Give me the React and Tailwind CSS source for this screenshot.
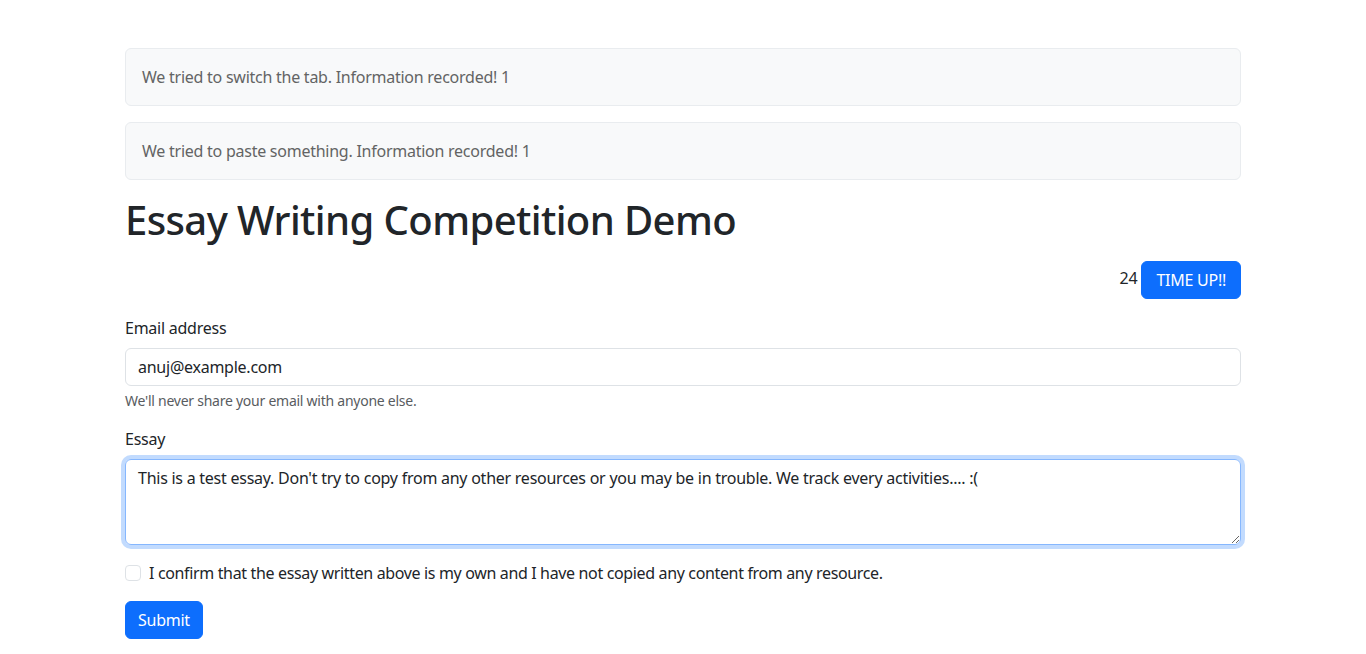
import { useState } from "react";

export default function App() {
  const [essay, setEssay] = useState(
    "This is a test essay. Don't try to copy from any other resources or you may be in trouble. We track every activities.... :("
  );

  return (
    <div
      className="min-h-screen bg-white text-[#212529] text-[16px] leading-[24px] tracking-[-0.25px]"
      style={{ fontFamily: '"Noto Sans", "Open Sans", sans-serif' }}
    >
      <div className="max-w-[1140px] mx-auto px-3 pt-12">
        {/* Alerts */}
        <div className="p-4 mb-4 border border-[#e9ecef] bg-[#f8f9fa] text-[#636464] rounded-[6px]">
          We tried to switch the tab. Information recorded! 1
        </div>
        <div className="p-4 mb-4 border border-[#e9ecef] bg-[#f8f9fa] text-[#636464] rounded-[6px]">
          We tried to paste something. Information recorded! 1
        </div>

        <h1 className="text-[40px] leading-[48px] font-medium tracking-[-0.6px] mb-2">
          Essay Writing Competition Demo
        </h1>

        {/* Timer */}
        <div className="flex justify-end items-center gap-1 mt-[17px] mb-[17px]">
          <span className="mb-[4px]">24</span>
          <button className="px-[14px] py-1.5 border border-[#0d6efd] bg-[#0d6efd] text-white rounded-[6px]">
            TIME UP!!
          </button>
        </div>

        <form onSubmit={(e) => e.preventDefault()}>
          <div className="mb-4">
            <label htmlFor="email" className="block mb-2">
              Email address
            </label>
            <input
              id="email"
              type="email"
              defaultValue="anuj@example.com"
              className="block w-full px-3 py-1.5 border border-[#dee2e6] rounded-[6px] text-[#212529] outline-none"
            />
            <div className="mt-1 text-[14px] leading-[21px] text-[#595c5f]">
              We'll never share your email with anyone else.
            </div>
          </div>

          <div className="mb-4">
            <label htmlFor="essay" className="block mb-2">
              Essay
            </label>
            <textarea
              id="essay"
              rows={3}
              value={essay}
              onChange={(e) => setEssay(e.target.value)}
              className="block w-full h-[86px] px-3 py-1.5 border border-[#86b7fe] rounded-[6px] text-[#212529] outline-none shadow-[0_0_0_4px_rgba(13,110,253,0.25)] resize-y"
            />
          </div>

          <div className="mb-4 flex items-center gap-2">
            <input
              id="confirm"
              type="checkbox"
              className="appearance-none w-4 h-4 border border-[#dee2e6] rounded-[4px] bg-white shrink-0"
            />
            <label htmlFor="confirm" className="tracking-[-0.35px]">
              I confirm that the essay written above is my own and I have not copied any content from any resource.
            </label>
          </div>

          <button
            type="submit"
            className="px-3 py-1.5 border border-[#0d6efd] bg-[#0d6efd] text-white rounded-[6px]"
          >
            Submit
          </button>
        </form>
      </div>
    </div>
  );
}
